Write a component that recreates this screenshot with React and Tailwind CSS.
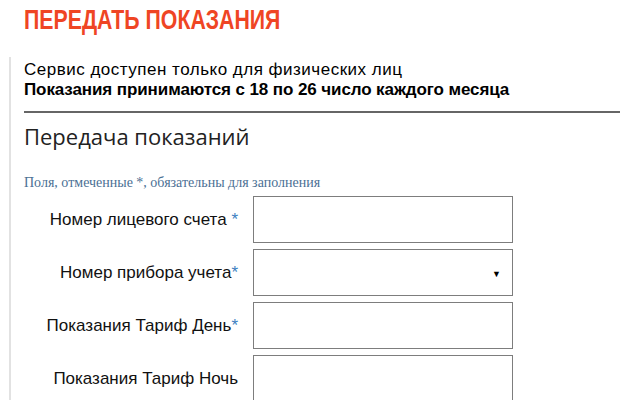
import React from "react";

const fields = [
  { label: "Номер лицевого счета", star: " *", select: false },
  { label: "Номер прибора учета", star: "*", select: true },
  { label: "Показания Тариф День", star: "*", select: false },
  { label: "Показания Тариф Ночь", star: "", select: false },
];

const FormRow = ({ label, star, select }) => (
  <div className="flex items-center">
    <label className="w-[229px] pr-[15px] text-right text-[17px] text-[#111] whitespace-nowrap">
      {label}
      {star && <span className="text-[#3d7fc1]">{star}</span>}
    </label>
    <div className="relative w-[260px] h-[47px] border border-[#7d7d7d] bg-white">
      {select && (
        <span className="absolute right-[11px] top-[20px] text-[9px] leading-none text-black">
          ▼
        </span>
      )}
    </div>
  </div>
);

export default function App() {
  return (
    <div className="w-[620px] h-[400px] overflow-hidden bg-white font-['Liberation_Sans',Arial,sans-serif]">
      <div className="pl-[24px] pt-[3px] h-[57px]">
        <h1 className="inline-block origin-left scale-x-[0.76] whitespace-nowrap text-[28px] leading-[34px] font-bold text-[#ef4524]">
          ПЕРЕДАТЬ ПОКАЗАНИЯ
        </h1>
      </div>
      <div className="ml-[9px] border-l-2 border-[#e2e2e2] pl-[13px] h-[343px]">
        <div className="pt-[3px] text-[17px] leading-[20px] text-black">
          <p className="tracking-[0.5px]">Сервис доступен только для физических лиц</p>
          <p className="font-bold tracking-[-0.1px]">Показания принимаются с 18 по 26 число каждого месяца</p>
        </div>
        <div className="mt-[11px] h-[2px] bg-[#666]" />
        <h2 className="mt-[10px] text-[22px] leading-[26px] text-[#222] font-['Open_Sans',sans-serif]">
          Передача показаний
        </h2>
        <p className="mt-[26px] text-[14px] leading-[16px] text-[#4b7094] font-['Liberation_Serif',serif]">
          Поля, отмеченные *, обязательны для заполнения
        </p>
        <div className="mt-[5px] flex flex-col gap-[6px]">
          {fields.map((f) => (
            <FormRow key={f.label} {...f} />
          ))}
        </div>
      </div>
    </div>
  );
}
